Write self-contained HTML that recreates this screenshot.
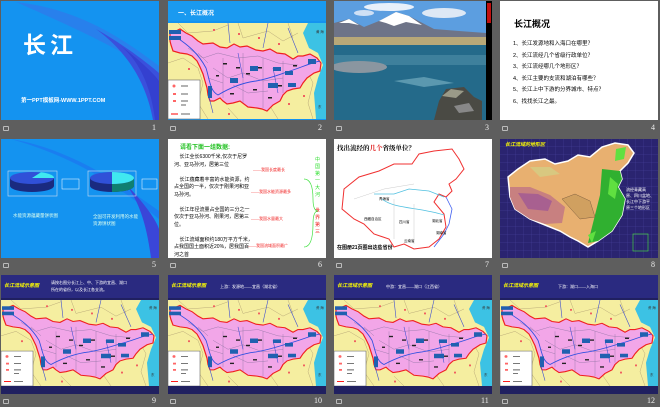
<!DOCTYPE html>
<html><head><meta charset="utf-8"><style>
*{margin:0;padding:0;box-sizing:border-box}
body{width:660px;height:407px;background:#5e5e5e;position:relative;overflow:hidden;font-family:"Liberation Sans","Noto Sans CJK SC",sans-serif}
.s{position:absolute;width:158px;height:119px;overflow:hidden;background:#fff}
.n{position:absolute;color:#eee;font-size:8px;font-family:"Liberation Serif",serif}
.ic{position:absolute;width:6px;height:5px;border:1px solid #bbb;border-radius:1px}
.t{position:absolute;white-space:nowrap}
svg{display:block}
</style></head><body>
<svg width="0" height="0" style="position:absolute">
<defs>
<g id="map">
<rect width="158" height="96" fill="#f5eea0"/>
<path d="M140 0H158V96H148L146 70 150 55 155 42 150 30 141 25 135 10Z" fill="#3cc2e4"/>
<path d="M0 40L15 35 30 45 35 60 30 80 40 96 M10 0 20 10 45 8 60 2 M70 0 75 15 100 8 115 18 130 10 M120 0 125 15 M135 40 145 60 140 80 145 96 M100 80 110 96 M60 85 70 96" stroke="#b8a878" stroke-width=".5" fill="none"/>
<path d="M2 10L8 8 12 6 18 10 24 13 30 18 35 21 45 20 52 24 59 25 66 21 72 24 79 23 88 27 95 28 102 26 109 30 117 31 125 36 130 33 135 33 142 31 149 35 153 40 152 48 146 50 139 55 135 60 132 65 125 66 119 68 115 72 112 78 105 82 99 88 94 86 89 85 80 84 72 78 65 80 59 81 55 78 52 75 46 78 42 78 40 72 39 65 37 58 35 51 32 44 29 38 24 33 19 31 12 30 5 28 3 22 2 18Z" fill="#f2a6e8" stroke="#f02020" stroke-width="1.2"/>
<path d="M20 25 35 35 50 30 70 35 90 33 110 40 130 42 M45 45 60 55 75 50 95 58 115 55 M55 35V75 M75 30V80 M95 35V85 M115 38V70 M40 55 55 60 M65 62 80 70 100 68 M30 30 40 40" stroke="#8a70a0" stroke-width=".4" fill="none"/>
<path d="M8 14C20 22 30 30 38 45 42 58 42 68 50 72 60 66 72 60 88 58 100 56 110 52 122 48 132 45 142 40 152 38" stroke="#3050e0" stroke-width=".9" fill="none"/>
<path d="M60 0 62 20 M100 0 95 25 M120 5 130 30 M70 30 75 55 M105 45 110 70 M40 70 45 90" stroke="#4050d0" stroke-width=".6" fill="none"/>
<g fill="#f06060"><rect x="45" y="6" width="2" height="2"/><rect x="70" y="10" width="2" height="2"/><rect x="90" y="14" width="2" height="2"/><rect x="110" y="20" width="2" height="2"/><rect x="20" y="45" width="2" height="2"/><rect x="120" y="80" width="2" height="2"/><rect x="135" y="72" width="2" height="2"/><rect x="60" y="90" width="2" height="2"/></g>
<g fill="#222"><rect x="55" y="40" width="4" height="1.5"/><rect x="68" y="44" width="4" height="1.5"/><rect x="78" y="50" width="4" height="1.5"/><rect x="90" y="44" width="4" height="1.5"/><rect x="48" y="52" width="3" height="1.5"/><rect x="62" y="70" width="4" height="1.5"/><rect x="85" y="66" width="4" height="1.5"/><rect x="100" y="74" width="4" height="1.5"/><rect x="125" y="42" width="4" height="1.5"/><rect x="110" y="62" width="4" height="1.5"/></g>
<rect x="1" y="7" width="12" height="4" fill="#2060b0"/><rect x="1" y="13" width="12" height="4" fill="#2060b0"/>
<rect x="82" y="43" width="8" height="5" fill="#2060b0"/><rect x="62" y="55" width="8" height="5" fill="#2060b0"/>
<rect x="105" y="44" width="8" height="4" fill="#2060b0"/><rect x="117" y="48" width="8" height="4" fill="#2060b0"/>
<rect x="100" y="60" width="10" height="5" fill="#2060b0"/><rect x="140" y="36" width="8" height="5" fill="#2060b0"/><rect x="120" y="60" width="8" height="4" fill="#2060b0"/>
<rect x="40" y="63" width="4" height="12" fill="#2060b0"/>
<rect x="0" y="57" width="32" height="39" fill="#fff" stroke="#666" stroke-width=".6"/>
<circle cx="6" cy="63" r="1.5" fill="#f66"/><rect x="5" y="70" width="3" height="2" fill="#f66"/><rect x="5" y="77" width="3" height="2" fill="#f66"/>
<path d="M3 91H10" stroke="#f00"/>
<path d="M13 63H20M13 71H20M13 78H20M13 82H18M13 91H22" stroke="#666" stroke-width="1"/>
<text x="148" y="10" font-size="3.5" fill="#333" font-family="Noto Sans CJK SC">黄 海</text>
<text x="150" y="85" font-size="3.5" fill="#333" font-family="Noto Sans CJK SC">东</text>
</g>
</defs></svg>

<!-- slide 1 -->
<div class="s" style="left:1px;top:1px;background:#1493f0">
<svg width="158" height="119"><path d="M15 1C80 8 125 40 158 65V80C140 60 115 45 15 1Z" fill="#2880ec"/><path d="M95 28C125 45 150 65 158 72V119H152C145 80 125 50 95 28Z" fill="#3a50dc"/><path d="M120 45C140 60 155 75 158 80V119H154C150 85 138 60 120 45Z" fill="#3440d0"/></svg>
<div class="t" style="left:22px;top:25px;color:#fff;font-size:23px;font-weight:bold;letter-spacing:4px">长江</div>
<div class="t" style="left:20px;top:95px;color:#fff;font-size:5.5px;font-weight:bold">第一PPT模板网-WWW.1PPT.COM</div>
</div>
<!-- slide 2 -->
<div class="s" style="left:168px;top:1px;background:#1493f0">
<div class="t" style="left:0;top:0;width:158px;height:20px;background:#1a9af0"></div>
<div class="t" style="left:10px;top:7px;color:#fff;font-size:6px;font-weight:bold">一、长江概况</div>
<svg width="158" height="97" style="position:absolute;top:22px"><use href="#map"/></svg>
</div>
<!-- slide 3 -->
<div class="s" style="left:334px;top:1px;background:#000">
<svg width="152" height="119">
<rect width="152" height="35" fill="#5c9ee0"/><ellipse cx="55" cy="6" rx="25" ry="4" fill="#e8f0fa"/><ellipse cx="110" cy="12" rx="22" ry="5" fill="#dde8f5"/><ellipse cx="30" cy="12" rx="10" ry="3" fill="#cfe0f5"/>
<path d="M0 22 15 18 30 26 45 20 62 11 75 15 100 28 125 30 152 32V40H0Z" fill="#6e7488"/>
<path d="M45 20 62 11 75 15 88 24 72 21 60 25 52 22Z M5 22 15 18 25 24 15 22Z" fill="#fff"/>
<rect y="36" width="152" height="9" fill="#b8a878"/>
<rect y="44" width="152" height="75" fill="#246a8a"/>
<path d="M0 54H152V64H0Z" fill="#5090a8" opacity=".6"/>
<ellipse cx="25" cy="66" rx="28" ry="6" fill="#8a96a0"/>
<path d="M60 80 90 76 120 82 90 86Z" fill="#80b8c8" opacity=".6"/>
<path d="M105 100 112 88 130 86 140 96 148 100 148 119H100Z" fill="#4a4a44"/><path d="M108 95 117 88 130 90 122 97Z" fill="#9a9a88"/><path d="M120 105 135 102 140 110 125 112Z" fill="#888"/>
</svg>
<div class="t" style="left:152px;top:0;width:6px;height:119px;background:#000"></div>
<div class="t" style="left:153px;top:2px;width:4px;height:20px;background:#c01010"></div>
</div>
<!-- slide 4 -->
<div class="s" style="left:500px;top:1px">
<div class="t" style="left:14px;top:16px;font-size:9px;font-weight:bold">长江概况</div>
<div class="t" style="left:13px;top:38px;font-size:5.5px;line-height:11.6px">1、长江发源地和入海口在哪里？<br>2、长江流经几个省级行政单位？<br>3、长江流经哪几个地形区？<br>4、长江主要的支流和湖泊有哪些？<br>5、长江上中下游的分界城市、特点？<br>6、找找长江之最。</div>
</div>
<!-- slide 5 -->
<div class="s" style="left:1px;top:139px;background:#1493f0">
<svg width="158" height="119"><path d="M10 0C70 10 120 45 158 72V80C120 50 80 20 10 0Z" fill="#1a7ef0"/><path d="M120 40C140 60 155 80 158 90V119H150C145 80 135 55 120 40Z" fill="#3a46d8"/>
<rect x="7" y="32" width="49" height="25" fill="none" stroke="#cde" stroke-width=".6"/>
<ellipse cx="31" cy="47" rx="22" ry="6" fill="#1a2a80"/><rect x="9" y="39" width="44" height="8" fill="#1a2a80"/><ellipse cx="31" cy="39" rx="22" ry="6" fill="#3050d8"/><path d="M31 39 L40 33.3 A22 6 0 0 1 53 39Z" fill="#40e8f0"/>
<rect x="87" y="32" width="48" height="25" fill="none" stroke="#cde" stroke-width=".6"/>
<ellipse cx="111" cy="47" rx="22" ry="6" fill="#1a2a80"/><rect x="89" y="39" width="44" height="8" fill="#1a2a80"/><path d="M111 39H133V47A22 6 0 0 1 111 53Z" fill="#108070"/><ellipse cx="111" cy="39" rx="22" ry="6" fill="#3050d8"/><path d="M111 33A22 6 0 0 1 111 45Z" fill="#40e8f0"/>
<rect x="61" y="40" width="17" height="10" fill="none" stroke="#fff" stroke-width=".5"/><rect x="141" y="40" width="15" height="10" fill="none" stroke="#fff" stroke-width=".5"/>
</svg>
<div class="t" style="left:12px;top:74px;color:#dfe;font-size:4.5px">水能资源蕴藏量饼状图</div>
<div class="t" style="left:92px;top:74px;color:#dfe;font-size:4.5px;line-height:7px">全国可开发利用的水能<br>资源饼状图</div>
</div>
<!-- slide 6 -->
<div class="s" style="left:168px;top:139px">
<div class="t" style="left:12px;top:3px;color:#20c020;font-size:6px;font-weight:bold">请看下面一组数据:</div>
<div class="t" style="left:6px;top:15px;font-size:5px;line-height:7.5px">&nbsp;&nbsp;&nbsp;&nbsp;长江全长6300千米,仅次于尼罗<br>河、亚马孙河，居第三位<br><br>&nbsp;&nbsp;&nbsp;&nbsp;长江蕴藏着丰富的水能资源，约<br>占全国的一半，仅次于刚果河和亚<br>马孙河。<br><br>&nbsp;&nbsp;&nbsp;&nbsp;长江年径流量占全国的三分之一<br>仅次于亚马孙河、刚果河，居第三<br>位。<br><br>&nbsp;&nbsp;&nbsp;&nbsp;长江流域面积约180万平方千米，<br>占我国国土面积近20%，居我国百<br>河之首</div>
<div class="t" style="left:85px;top:28px;color:#f02020;font-size:4px">——我国长度最长</div>
<div class="t" style="left:83px;top:50px;color:#f02020;font-size:4px">——我国水能资源最多</div>
<div class="t" style="left:83px;top:77px;color:#f02020;font-size:4px">——我国水量最大</div>
<div class="t" style="left:80px;top:104px;color:#f02020;font-size:4px">——我国流域面积最广</div>
<div class="t" style="left:147px;top:18px;color:#30e030;font-size:5px;line-height:7px;width:7px;white-space:normal">中国第一大河</div>
<div class="t" style="left:147px;top:69px;color:#f02020;font-size:5px;line-height:7px;width:7px;white-space:normal">世界第三</div>
<svg width="158" height="119" style="position:absolute;left:0;top:0"><path d="M136 40Q145 40 145 60Q145 72 150 72Q145 72 145 85Q145 108 136 108" stroke="#40e040" fill="none" stroke-width=".7"/></svg>
</div>
<!-- slide 7 -->
<div class="s" style="left:334px;top:139px">
<div class="t" style="left:3px;top:4px;font-size:6.5px;font-weight:bold;font-family:'Liberation Serif','Noto Serif CJK SC',serif">找出流经的<span style="color:#e02020">几个</span>省级单位？</div>
<div class="t" style="left:80px;top:21px;color:#e02020;font-size:5px;font-weight:bold">11个</div>
<svg width="158" height="119" style="position:absolute;top:0">
<path d="M10 50 25 38 45 32 60 25 78 25 85 15 100 12 118 10 125 20 130 30 122 40 115 45 118 52 112 58 105 55 100 63 110 75 112 88 105 100 95 108 80 110 70 105 60 108 55 100 40 95 30 85 20 80 8 70Z" fill="#fff" stroke="#f03030" stroke-width="1"/>
<path d="M40 55 60 55 75 50 95 52 110 58" stroke="#50c0e0" fill="none" stroke-width=".8"/>
<path d="M48 60C60 70 85 68 110 76" stroke="#50c0e0" fill="none" stroke-width=".8"/>
<path d="M112 58 118 70 115 85 110 95 100 108" stroke="#4060f0" fill="none" stroke-width=".8"/>
<path d="M20 60 50 50 80 45 M60 60V100 M80 65V105" stroke="#ccc" fill="none" stroke-width=".5"/>
</svg>
<div class="t" style="left:3px;top:105px;font-size:5px;font-weight:bold">在图册21页圈出这些省份</div>
<div class="t" style="left:45px;top:58px;font-size:3.5px">青海省</div><div class="t" style="left:30px;top:78px;font-size:3.5px">西藏自治区</div>
<div class="t" style="left:65px;top:81px;font-size:3.5px">四川省</div><div class="t" style="left:98px;top:80px;font-size:3.5px">湖北省</div>
<div class="t" style="left:70px;top:100px;font-size:3.5px">云南省</div><div class="t" style="left:102px;top:92px;font-size:3.5px">湖南省</div>
</div>
<!-- slide 8 -->
<div class="s" style="left:500px;top:139px;background:#2a2470">
<svg width="158" height="119"><defs><pattern id="g" width="8" height="8" patternUnits="userSpaceOnUse"><path d="M8 0V8H0" stroke="#4a44a0" fill="none" stroke-width=".5"/></pattern></defs>
<rect width="158" height="119" fill="url(#g)"/>
<path d="M8 38 18 30 30 22 45 20 55 25 68 22 78 16 90 18 102 8 115 4 128 6 134 14 128 24 120 32 122 40 118 48 125 60 122 76 112 92 98 102 88 108 78 102 70 98 60 92 45 86 30 80 15 70 10 58Z" fill="#e8b070" stroke="#fff" stroke-width="1.5"/>
<path d="M10 48 30 48 50 56 65 68 62 84 45 85 30 80 15 70 10 58Z" fill="#c88080"/>
<path d="M18 54 38 55 52 62 48 72 28 70Z" fill="#a86090"/>
<path d="M102 30 120 32 122 40 118 48 125 60 122 76 112 92 98 102 88 104 92 88 96 72 100 56Z" fill="#30b030"/>
<path d="M110 38 118 45 115 60 108 55Z M88 96 96 92 92 104Z M116 10 126 8 124 20 115 22Z" fill="#60e040"/>
<path d="M30 28 50 28 60 35 40 38Z" fill="#d8c880"/>
<path d="M62 60 75 55 90 62 95 78 80 80Z" fill="#d0a060" stroke="#806040" stroke-width=".5"/>
<rect x="133" y="95" width="15" height="17" fill="none" stroke="#4c4" stroke-width=".7"/>
</svg>
<div class="t" style="left:5px;top:2px;color:#ff0;font-size:5px;font-weight:bold;font-style:italic">长江流域的地形区</div>
<div class="t" style="left:126px;top:48px;color:#fff;font-size:4px;line-height:6px">流经青藏高<br>原、四川盆地、<br>长江中下游平<br>原三个地形区</div>
</div>

<!-- row 3 -->
<div class="s" style="left:1px;top:275px;background:#202060"><div class="t" style="left:0;top:0;width:158px;height:23px;background:#2a2a80"></div>
<div class="t" style="left:3px;top:7px;color:#ff0;font-size:5px;font-weight:bold;font-style:italic">长江流域示意图</div>
<div class="t" style="left:50px;top:4px;color:#fff;font-size:4px;line-height:7px">请按右图分长江上、中、下游的宜昌、湖口<br>所在的省份，以及长江各支流。</div>
<svg width="158" height="86" viewBox="0 0 158 96" preserveAspectRatio="none" style="position:absolute;top:25px"><use href="#map"/></svg></div>
<div class="s" style="left:168px;top:275px;background:#202060"><div class="t" style="left:0;top:0;width:158px;height:23px;background:#2a2a80"></div>
<div class="t" style="left:3px;top:7px;color:#ff0;font-size:5px;font-weight:bold;font-style:italic">长江流域示意图</div>
<div class="t" style="left:52px;top:9px;color:#fff;font-size:4px">上游：发源地——宜昌（湖北省）</div>
<svg width="158" height="86" viewBox="0 0 158 96" preserveAspectRatio="none" style="position:absolute;top:25px"><use href="#map"/></svg></div>
<div class="s" style="left:334px;top:275px;background:#202060"><div class="t" style="left:0;top:0;width:158px;height:23px;background:#2a2a80"></div>
<div class="t" style="left:3px;top:7px;color:#ff0;font-size:5px;font-weight:bold;font-style:italic">长江流域示意图</div>
<div class="t" style="left:52px;top:9px;color:#fff;font-size:4px">中游：宜昌——湖口（江西省）</div>
<svg width="158" height="86" viewBox="0 0 158 96" preserveAspectRatio="none" style="position:absolute;top:25px"><use href="#map"/></svg></div>
<div class="s" style="left:500px;top:275px;background:#202060"><div class="t" style="left:0;top:0;width:158px;height:23px;background:#2a2a80"></div>
<div class="t" style="left:3px;top:7px;color:#ff0;font-size:5px;font-weight:bold;font-style:italic">长江流域示意图</div>
<div class="t" style="left:58px;top:9px;color:#fff;font-size:4px">下游：湖口——入海口</div>
<svg width="158" height="86" viewBox="0 0 158 96" preserveAspectRatio="none" style="position:absolute;top:25px"><use href="#map"/></svg></div>

<!-- labels -->
<div class="ic" style="left:3px;top:126px"></div><div class="n" style="left:152px;top:123px">1</div>
<div class="ic" style="left:170px;top:126px"></div><div class="n" style="left:318px;top:123px">2</div>
<div class="ic" style="left:336px;top:126px"></div><div class="n" style="left:485px;top:123px">3</div>
<div class="ic" style="left:502px;top:126px"></div><div class="n" style="left:651px;top:123px">4</div>
<div class="ic" style="left:3px;top:263px"></div><div class="n" style="left:152px;top:260px">5</div>
<div class="ic" style="left:170px;top:263px"></div><div class="n" style="left:318px;top:260px">6</div>
<div class="ic" style="left:336px;top:263px"></div><div class="n" style="left:485px;top:260px">7</div>
<div class="ic" style="left:502px;top:263px"></div><div class="n" style="left:651px;top:260px">8</div>
<div class="ic" style="left:3px;top:399px"></div><div class="n" style="left:152px;top:396px">9</div>
<div class="ic" style="left:170px;top:399px"></div><div class="n" style="left:314px;top:396px">10</div>
<div class="ic" style="left:336px;top:399px"></div><div class="n" style="left:481px;top:396px">11</div>
<div class="ic" style="left:502px;top:399px"></div><div class="n" style="left:647px;top:396px">12</div>
</body></html>
